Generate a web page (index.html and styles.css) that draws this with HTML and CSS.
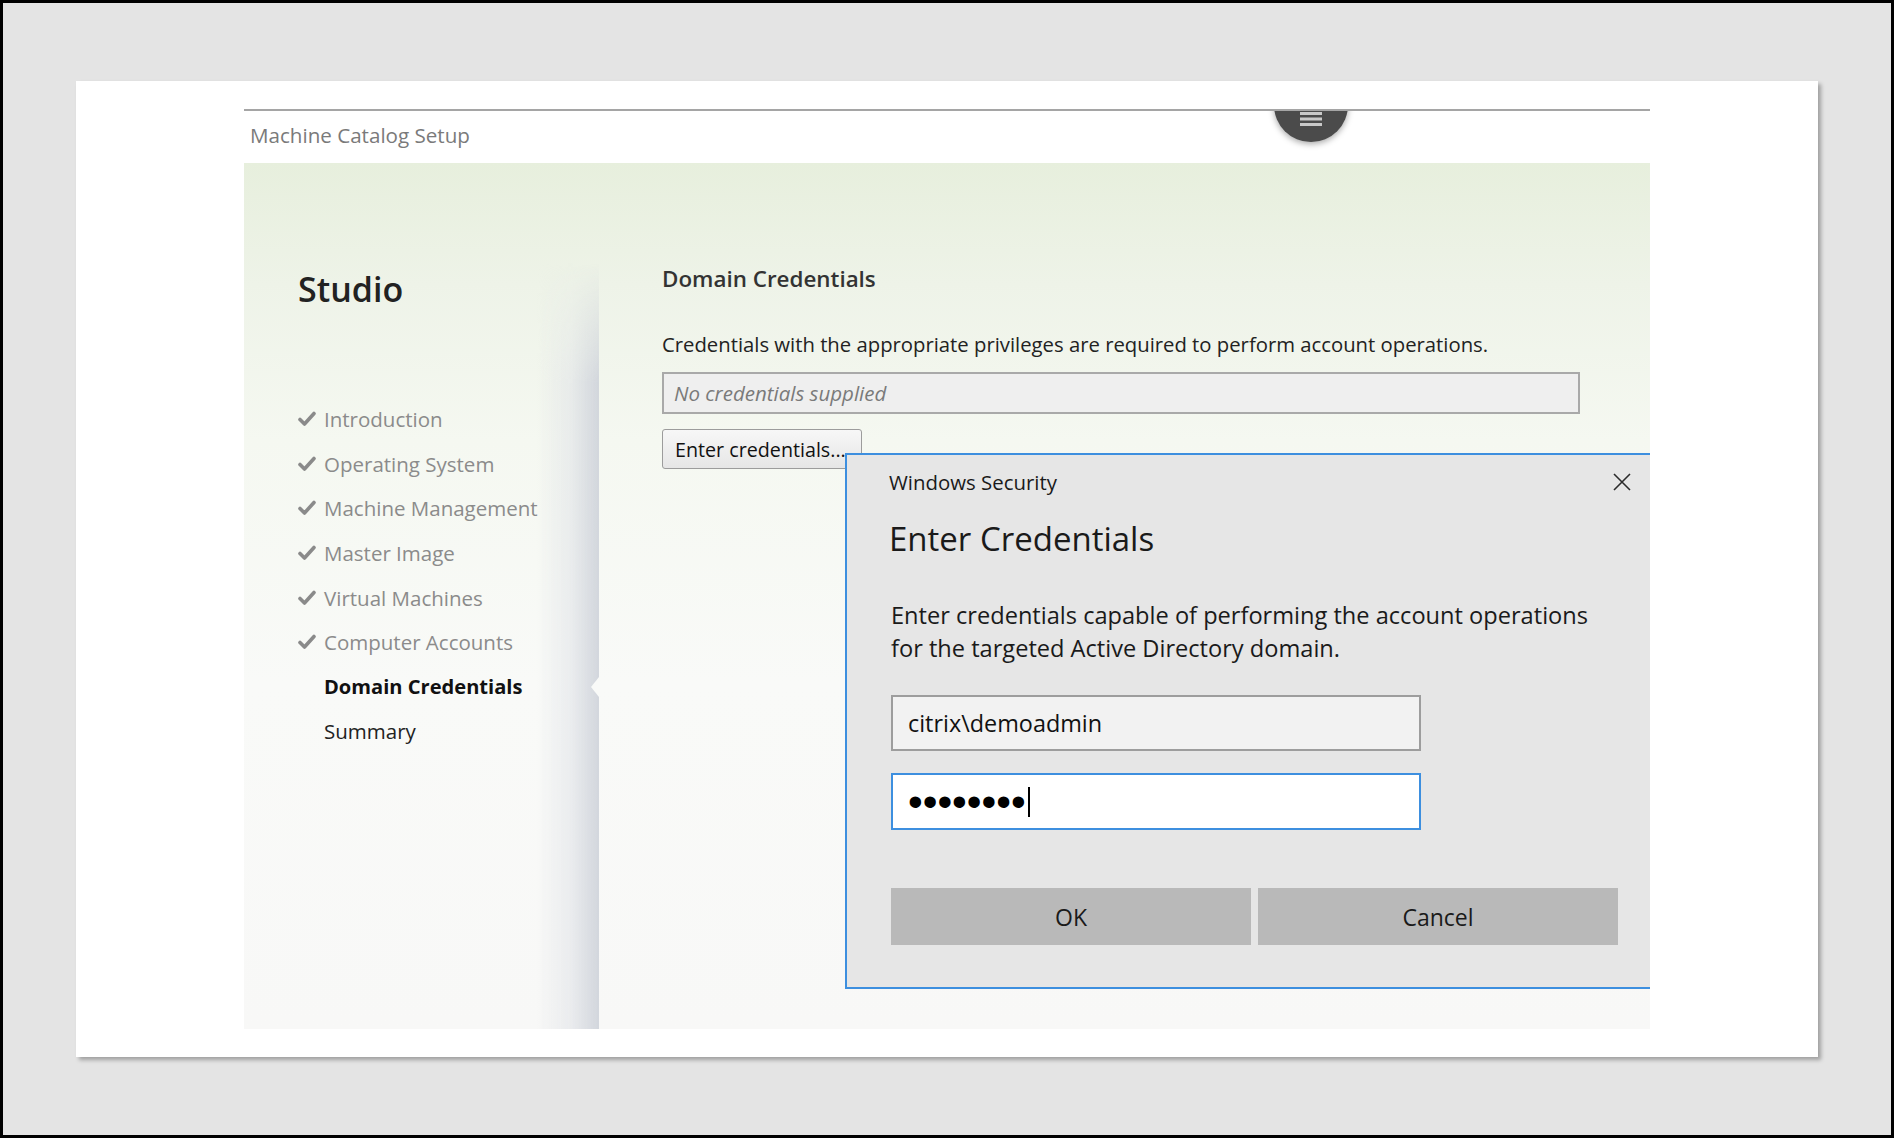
FILE: index.html
```html
<!DOCTYPE html>
<html lang="en">
<head>
<meta charset="utf-8">
<title>Machine Catalog Setup</title>
<link rel="stylesheet" href="styles.css">
</head>
<body>
<div class="screen">
  <div class="card">
    <div class="wizard">
      <header class="wiz-head">
        <span class="wiz-title">Machine Catalog Setup</span>
        <div class="fab-clip">
          <div class="fab">
            <svg class="fab-icon" width="24" height="14" viewBox="0 0 24 14"><rect x="1" y="0" width="22" height="3" fill="#c9c9c9"/><rect x="1" y="5.5" width="22" height="3" fill="#c9c9c9"/><rect x="1" y="11" width="22" height="3" fill="#c9c9c9"/></svg>
          </div>
        </div>
      </header>
      <div class="panel">
        <aside class="sidebar">
          <h1 class="brand">Studio</h1>
          <ul class="steps">
            <li class="step done"><svg class="check" width="18" height="16" viewBox="0 0 18 16"><path d="M2 8.5 L6.5 13 L16 2.5" fill="none" stroke="#8a8a8a" stroke-width="3.6" stroke-linecap="round" stroke-linejoin="round"/></svg>Introduction</li>
            <li class="step done"><svg class="check" width="18" height="16" viewBox="0 0 18 16"><path d="M2 8.5 L6.5 13 L16 2.5" fill="none" stroke="#8a8a8a" stroke-width="3.6" stroke-linecap="round" stroke-linejoin="round"/></svg>Operating System</li>
            <li class="step done"><svg class="check" width="18" height="16" viewBox="0 0 18 16"><path d="M2 8.5 L6.5 13 L16 2.5" fill="none" stroke="#8a8a8a" stroke-width="3.6" stroke-linecap="round" stroke-linejoin="round"/></svg>Machine Management</li>
            <li class="step done"><svg class="check" width="18" height="16" viewBox="0 0 18 16"><path d="M2 8.5 L6.5 13 L16 2.5" fill="none" stroke="#8a8a8a" stroke-width="3.6" stroke-linecap="round" stroke-linejoin="round"/></svg>Master Image</li>
            <li class="step done"><svg class="check" width="18" height="16" viewBox="0 0 18 16"><path d="M2 8.5 L6.5 13 L16 2.5" fill="none" stroke="#8a8a8a" stroke-width="3.6" stroke-linecap="round" stroke-linejoin="round"/></svg>Virtual Machines</li>
            <li class="step done"><svg class="check" width="18" height="16" viewBox="0 0 18 16"><path d="M2 8.5 L6.5 13 L16 2.5" fill="none" stroke="#8a8a8a" stroke-width="3.6" stroke-linecap="round" stroke-linejoin="round"/></svg>Computer Accounts</li>
            <li class="step active"><span class="check-space"></span>Domain Credentials</li>
            <li class="step"><span class="check-space"></span>Summary</li>
          </ul>
        </aside>
        <main class="content">
          <h2 class="page-title">Domain Credentials</h2>
          <p class="page-desc">Credentials with the appropriate privileges are required to perform account operations.</p>
          <div class="cred-field">No credentials supplied</div>
          <button class="btn-enter" type="button">Enter credentials...</button>
        </main>
        <div class="dialog">
          <div class="dlg-bar">
            <span class="dlg-app">Windows Security</span>
            <svg class="dlg-close" width="20" height="20" viewBox="0 0 20 20"><path d="M2 2 L18 18 M18 2 L2 18" stroke="#2b2b2b" stroke-width="1.6"/></svg>
          </div>
          <h3 class="dlg-title">Enter Credentials</h3>
          <p class="dlg-text">Enter credentials capable of performing the account operations<br>for the targeted Active Directory domain.</p>
          <div class="dlg-input user">citrix\demoadmin</div>
          <div class="dlg-input pass"><span class="dots">••••••••</span><span class="caret"></span></div>
          <div class="dlg-actions">
            <button class="dlg-btn" type="button">OK</button>
            <button class="dlg-btn" type="button">Cancel</button>
          </div>
        </div>
      </div>
    </div>
  </div>
</div>
</body>
</html>
```

FILE: styles.css
```css
* { box-sizing: border-box; }
html, body { margin: 0; padding: 0; }
body { font-family: "Open Sans", "Noto Sans", sans-serif; }

.screen {
  width: 1894px;
  height: 1138px;
  border: 3px solid #000;
  background: #e4e4e4;
  padding: 78px 0 0 73px;
}

.card {
  width: 1742px;
  height: 976px;
  background: #fff;
  box-shadow: 3px 3px 4px rgba(0, 0, 0, 0.3);
  padding: 28px 168px 0;
}

.wizard { width: 1406px; }

.wiz-head {
  position: relative;
  height: 54px;
  border-top: 2px solid #a5a5a5;
  display: flex;
  align-items: center;
  padding: 0 0 4px 6px;
}
.wiz-title {
  font-size: 20.6px;
  color: #7a7a7a;
}

.fab-clip {
  position: absolute;
  top: 0;
  left: 1016px;
  width: 104px;
  height: 48px;
  overflow: hidden;
}
.fab {
  position: absolute;
  left: 14px;
  top: -43px;
  width: 74px;
  height: 74px;
  border-radius: 50%;
  background: #4b4b4b;
  box-shadow: 0 2px 6px rgba(0, 0, 0, 0.35);
}
.fab-icon { position: absolute; left: 25px; top: 44px; }

.panel {
  position: relative;
  height: 866px;
  display: grid;
  grid-template-columns: 355px 1fr;
  overflow: hidden;
  background: linear-gradient(180deg, #e7efdd 0%, #eef3e8 14%, #f5f8f1 32%, #f9faf8 60%, #f8f8f7 100%);
}

.sidebar {
  position: relative;
  padding: 104px 0 0 54px;
}
.sidebar::after {
  content: "";
  position: absolute;
  right: 0;
  top: 100px;
  bottom: 0;
  width: 62px;
  background: linear-gradient(90deg, rgba(225, 227, 231, 0) 0%, rgba(222, 225, 230, 0.55) 55%, rgba(208, 212, 219, 0.95) 100%);
  -webkit-mask-image: linear-gradient(180deg, transparent 0, #000 120px);
  mask-image: linear-gradient(180deg, transparent 0, #000 120px);
}

.brand {
  margin: 0;
  font-size: 34px;
  line-height: 44px;
  font-weight: 600;
  color: #222;
}

.steps {
  list-style: none;
  margin: 86px 0 0;
  padding: 0;
}
.step {
  position: relative;
  height: 44.6px;
  display: flex;
  align-items: center;
  font-size: 20.5px;
  color: #222;
}
.step.done { color: #8b8b8b; }
.step.active { font-weight: 700; color: #111; font-size: 20.1px; }
.step.active::after {
  content: "";
  position: absolute;
  right: 0;
  top: 50%;
  margin-top: -10px;
  border-top: 10px solid transparent;
  border-bottom: 10px solid transparent;
  border-right: 8px solid #f9faf8;
  z-index: 2;
}
.check { flex: none; margin-right: 8px; }
.check-space { flex: none; width: 26px; }

.content {
  padding: 101px 0 0 63px;
}
.page-title {
  margin: 0;
  font-size: 22.4px;
  line-height: 30px;
  font-weight: 600;
  color: #333;
}
.page-desc {
  margin: 37px 0 0;
  font-size: 20.3px;
  line-height: 27px;
  color: #222;
}
.cred-field {
  margin-top: 14px;
  width: 918px;
  height: 42px;
  border: 2px solid #a9a9a9;
  background: #efefef;
  padding-left: 10px;
  display: flex;
  align-items: center;
  font-size: 20.5px;
  font-style: italic;
  color: #7a7a7a;
}
.btn-enter {
  display: block;
  margin-top: 15px;
  width: 200px;
  height: 40px;
  border: 1px solid #9c9c9c;
  border-radius: 3px;
  background: linear-gradient(180deg, #f7f7f7 0%, #e6e6e6 100%);
  padding: 0 0 0 12px;
  text-align: left;
  font-family: inherit;
  font-size: 19.7px;
  color: #111;
}

.dialog {
  position: absolute;
  left: 601px;
  top: 290px;
  width: 830px;
  height: 536px;
  border: 2px solid #3d8fdf;
  background: #e6e6e6;
  padding: 13px 0 0 42px;
  font-family: "Open Sans", "Noto Sans", sans-serif;
}
.dlg-bar {
  width: 743px;
  display: flex;
  justify-content: space-between;
  align-items: center;
  height: 28px;
}
.dlg-app { font-size: 20.4px; color: #1a1a1a; }
.dlg-title {
  margin: 21px 0 0;
  font-size: 33px;
  line-height: 44px;
  font-weight: 400;
  color: #1a1a1a;
}
.dlg-text {
  margin: 38px 0 0 2px;
  font-size: 23.6px;
  line-height: 33px;
  color: #1a1a1a;
}
.dlg-input {
  margin-left: 2px;
  width: 530px;
  display: flex;
  align-items: center;
  font-size: 23.4px;
  color: #111;
}
.dlg-input.user {
  margin-top: 30px;
  height: 56px;
  border: 2px solid #9d9d9d;
  background: #f2f2f2;
  padding-left: 15px;
}
.dlg-input.pass {
  margin-top: 22px;
  height: 57px;
  border: 2px solid #3d8fdf;
  background: #fff;
  padding-left: 15px;
}
.dots {
  font-family: "Liberation Sans", sans-serif;
  font-size: 42px;
  line-height: 20px;
  color: #000;
}
.caret {
  width: 2px;
  height: 30px;
  background: #000;
  margin-left: 2px;
}
.dlg-actions {
  margin: 58px 0 0 2px;
  display: flex;
  gap: 7px;
}
.dlg-btn {
  width: 360px;
  height: 57px;
  border: none;
  background: #b9b9b9;
  font-family: inherit;
  font-size: 23px;
  color: #1a1a1a;
}
```
